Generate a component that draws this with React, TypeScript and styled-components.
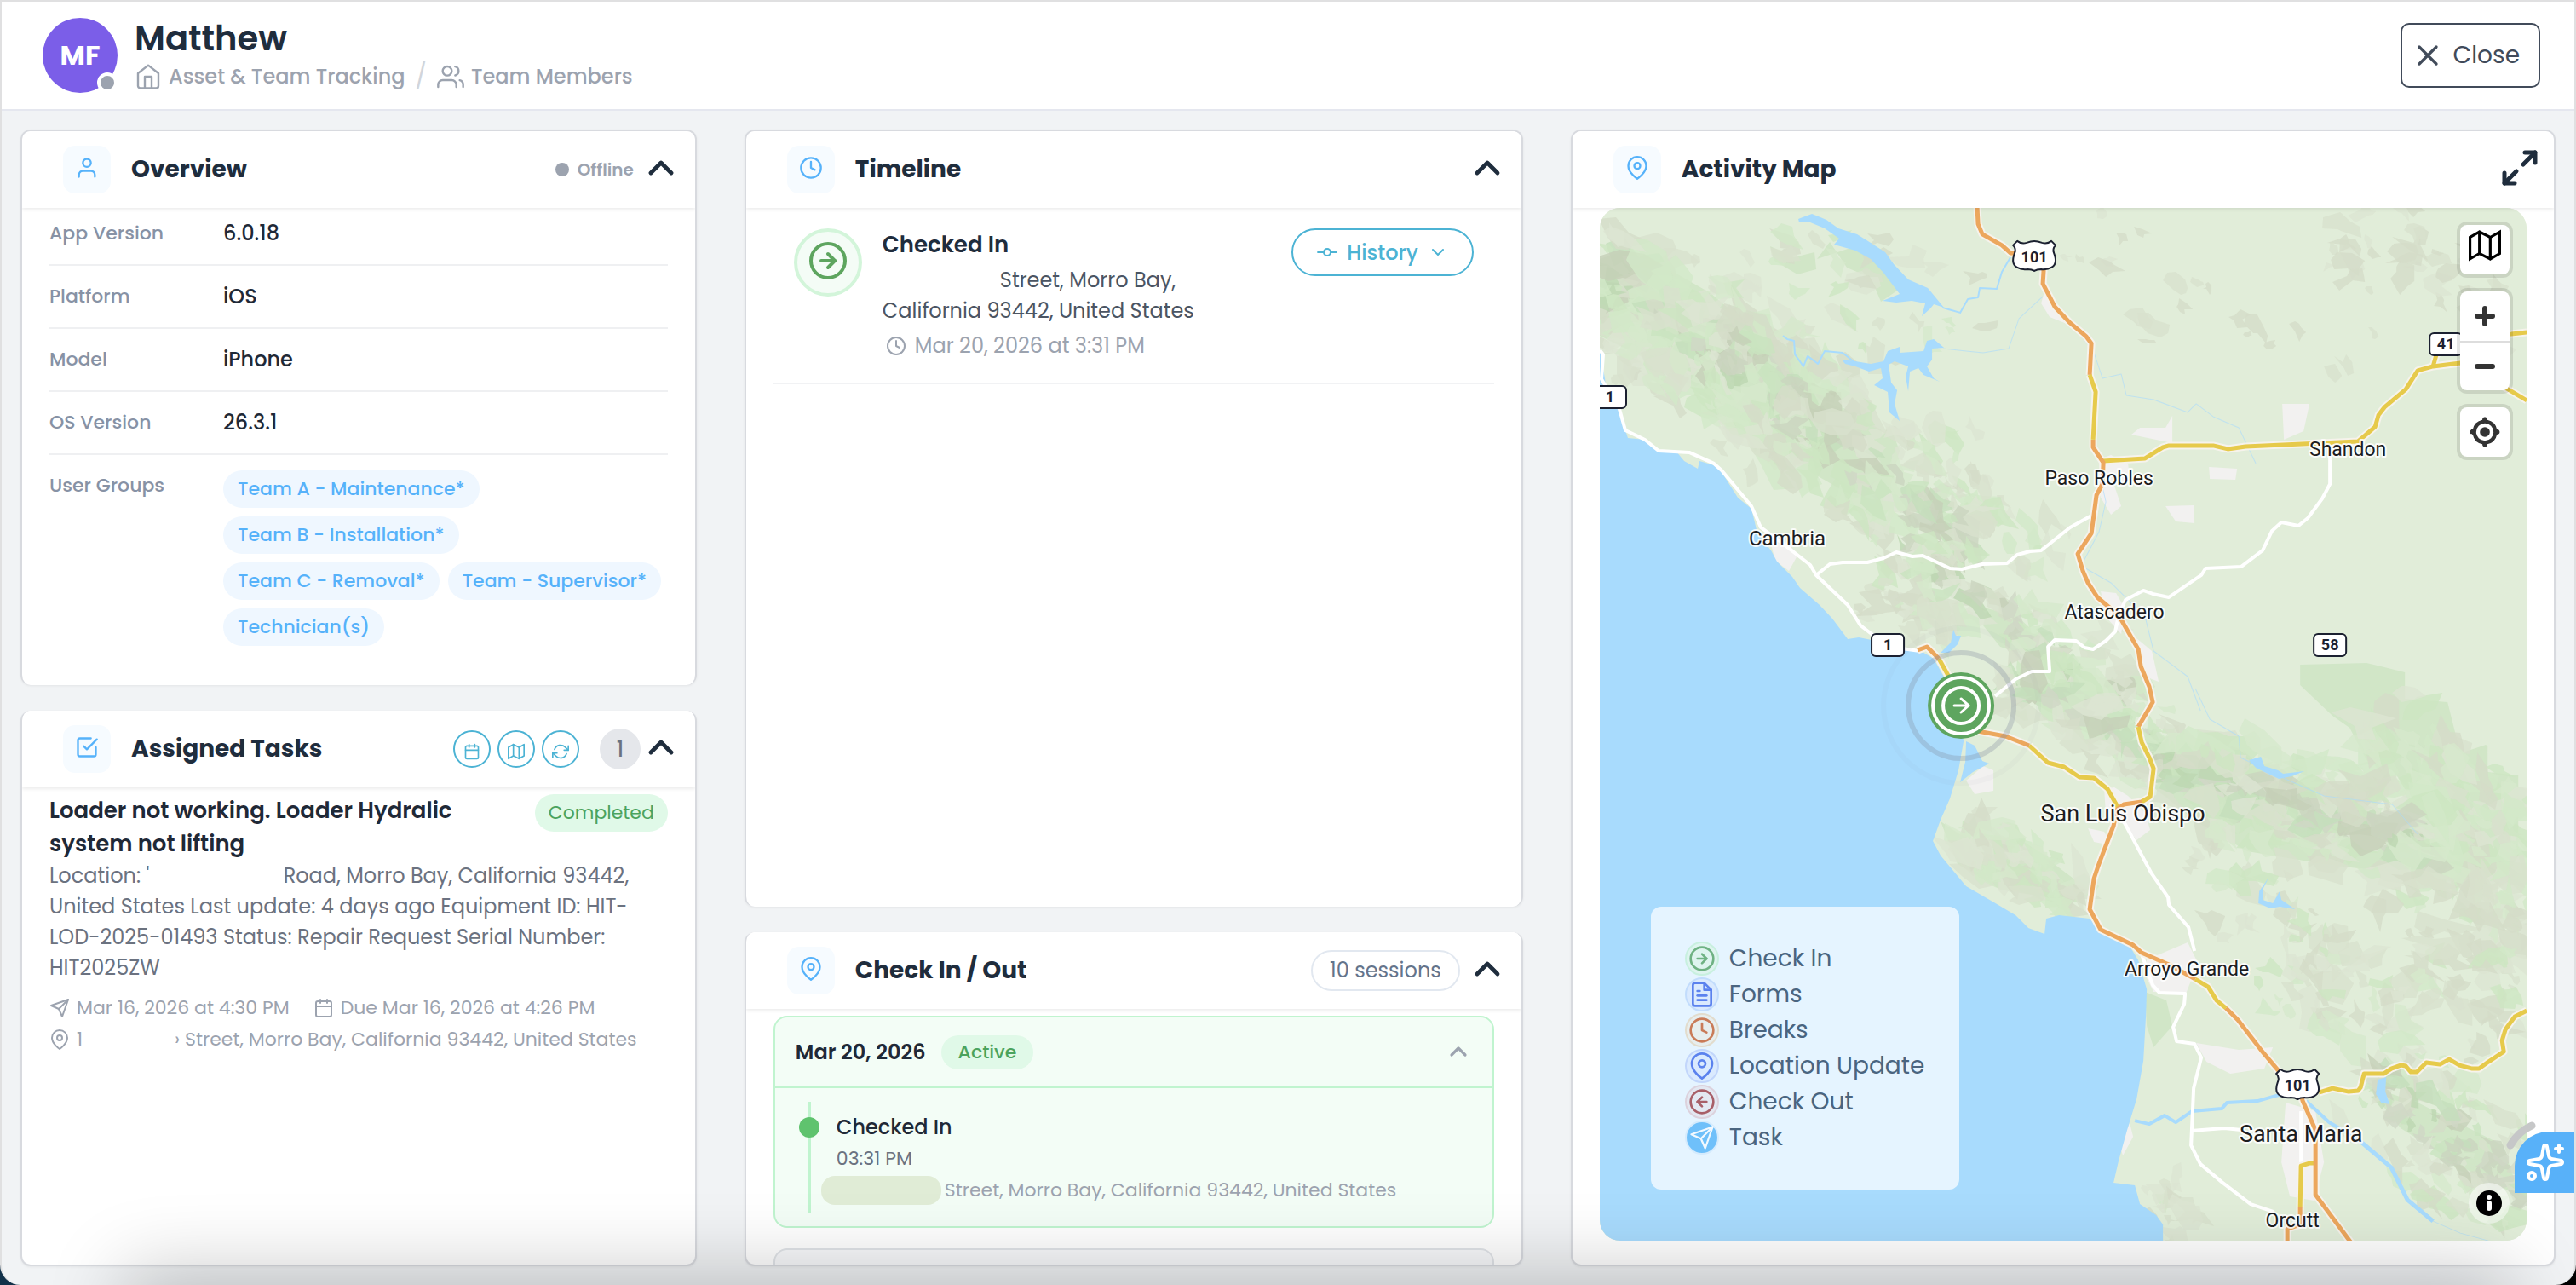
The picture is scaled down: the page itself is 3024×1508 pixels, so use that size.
import React from "react";
import styled, { createGlobalStyle } from "styled-components";
import {
  FiHome, FiUsers, FiUser, FiX, FiChevronUp, FiChevronDown, FiClock, FiMapPin, FiCheckSquare,
  FiCalendar, FiMap, FiRefreshCw, FiSend, FiGitCommit, FiMaximize2, FiArrowRightCircle,
  FiArrowLeftCircle, FiFileText,
} from "react-icons/fi";
import { Sparkles } from "lucide-react";

const c = {
  ink: "#1f2d3d",
  text: "#1f2937",
  body: "#4b5563",
  mid: "#6b7280",
  muted: "#9ca3af",
  label: "#8792a5",
  blue: "#56b2fa",
  teal: "#4cb3d4",
  green: "#5ea55f",
  line: "#eff0f2",
  edge: "#d8dadf",
};

const Global = createGlobalStyle`
  * { box-sizing: border-box; }
  body {
    margin: 0;
    background: linear-gradient(90deg, #12324a, #000);
    font-family: Poppins, Inter, "Open Sans", sans-serif;
    color: ${c.text};
  }
  h1, h2, h3, p, dl, dd, ul, ol { margin: 0; padding: 0; }
  ul, ol { list-style: none; }
  button { font: inherit; color: inherit; background: none; border: 0; padding: 0; cursor: pointer; }
  a { color: inherit; text-decoration: none; }
  svg { display: block; flex: none; }
`;

/* ---------- page frame ---------- */

const Frame = styled.div`
  position: relative;
  display: flex;
  flex-direction: column;
  height: 100vh;
  overflow: hidden;
  background: #f1f3f5;
  border: 2px solid #e0e0e1;
  border-bottom: 0;
  border-radius: 0 0 24px 24px;
`;

const BottomShade = styled.div`
  position: absolute;
  left: 160px;
  right: 90px;
  top: 100%;
  height: 80px;
  box-shadow: 0 0 90px 16px rgba(0, 0, 0, 0.22);
  pointer-events: none;
  z-index: 4;
`;

const TopBar = styled.header`
  display: flex;
  align-items: center;
  gap: 20px;
  flex: none;
  height: 128px;
  padding: 0 40px 0 48px;
  background: #fff;
  border-bottom: 2px solid #e5e7ef;
`;

const Avatar = styled.div`
  position: relative;
  display: grid;
  place-items: center;
  width: 88px;
  height: 88px;
  border-radius: 50%;
  background: #7b5ee8;
  color: #fff;
  font-size: 32px;
  font-weight: 700;
`;

const Presence = styled.span`
  position: absolute;
  right: 0;
  bottom: 0;
  width: 24px;
  height: 24px;
  border: 4px solid #fff;
  border-radius: 50%;
  background: ${c.muted};
`;

const Identity = styled.div`
  flex: 1;
  padding-top: 4px;
`;

const Name = styled.h1`
  font-size: 40px;
  line-height: 46px;
  font-weight: 600;
  color: ${c.ink};
`;

const Crumbs = styled.nav`
  display: flex;
  align-items: center;
  gap: 12px;
  font-size: 24px;
  font-weight: 500;
  line-height: 44px;
  color: ${c.muted};
  span { color: #d1d5db; font-size: 28px; font-weight: 400; }
`;

const Crumb = styled.a`
  display: flex;
  align-items: center;
  gap: 8px;
`;

const CloseButton = styled.button`
  display: flex;
  align-items: center;
  gap: 10px;
  height: 76px;
  padding: 0 22px 0 10px;
  border: 2px solid #414b5a;
  border-radius: 10px;
  color: #414b5a;
  font-size: 28px;
`;

const Board = styled.main`
  flex: 1;
  min-height: 0;
  display: grid;
  grid-template-columns: 793fr 913fr 1155fr;
  gap: 56px;
  padding: 22px;
`;

const Column = styled.div`
  display: flex;
  flex-direction: column;
  gap: 30px;
  min-width: 0;
  min-height: 0;
`;

/* ---------- cards ---------- */

const CardBox = styled.section<{ $grow: number; $open?: "top" | "bottom" }>`
  flex: ${(p) => p.$grow} 1 0;
  min-height: 0;
  display: flex;
  flex-direction: column;
  overflow: hidden;
  background: #fff;
  border: 2px solid ${c.edge};
  ${(p) => p.$open === "top" && "border-top: 0;"}
  ${(p) => p.$open === "bottom" && "border-bottom: 0;"}
  border-radius: 12px;
  box-shadow: 0 1px 3px rgba(0, 0, 0, 0.06);
`;

const CardHead = styled.div`
  position: relative;
  z-index: 1;
  flex: none;
  display: flex;
  align-items: center;
  gap: 24px;
  height: 90px;
  padding: 0 16px 0 48px;
  background: #fff;
  box-shadow: 0 2px 4px rgba(0, 0, 0, 0.08);
`;

const IconTile = styled.span`
  display: grid;
  place-items: center;
  width: 56px;
  height: 56px;
  padding-bottom: 4px;
  border-radius: 14px;
  background: #f6fbff;
  color: ${c.blue};
`;

const CardTitle = styled.h2`
  flex: 1;
  font-size: 28px;
  font-weight: 700;
  color: ${c.ink};
`;

const Actions = styled.div<{ $gap?: number }>`
  display: flex;
  align-items: center;
  gap: ${(p) => p.$gap ?? 8}px;
`;

const IconButton = styled.button`
  padding-bottom: 4px;
  color: ${c.ink};
`;

const Status = styled.span`
  display: flex;
  align-items: center;
  gap: 10px;
  color: ${c.muted};
  font-size: 20px;
  font-weight: 600;
  &::before {
    content: "";
    width: 16px;
    height: 16px;
    border-radius: 50%;
    background: currentColor;
  }
`;

const RoundButtons = styled.div`
  display: flex;
  gap: 8px;
  margin-right: 24px;
`;

const RoundButton = styled.button`
  display: grid;
  place-items: center;
  width: 44px;
  height: 44px;
  padding-top: 6px;
  border: 2px solid ${c.teal};
  border-radius: 50%;
  color: ${c.teal};
`;

const Count = styled.span`
  display: grid;
  place-items: center;
  width: 48px;
  height: 48px;
  border-radius: 50%;
  background: #e5e7eb;
  color: ${c.mid};
  font-size: 24px;
  font-weight: 500;
`;

const Sessions = styled.span`
  padding: 0 20px;
  border: 2px solid #e2e8f0;
  border-radius: 24px;
  color: #64748b;
  font-size: 24px;
  line-height: 44px;
`;

interface CardProps {
  title: string;
  icon: React.ReactNode;
  grow?: number;
  open?: "top" | "bottom";
  actions: React.ReactNode;
  children: React.ReactNode;
}

function Card({ title, icon, grow = 1, open, actions, children }: CardProps) {
  return (
    <CardBox $grow={grow} $open={open} aria-label={title}>
      <CardHead>
        <IconTile>{icon}</IconTile>
        <CardTitle>{title}</CardTitle>
        {actions}
      </CardHead>
      {children}
    </CardBox>
  );
}

const Collapse = () => (
  <IconButton aria-label="Collapse"><FiChevronUp size={48} strokeWidth={2.4} /></IconButton>
);

/* ---------- overview ---------- */

const Facts = styled.dl`
  padding: 0 32px;
`;

const Fact = styled.div`
  display: grid;
  grid-template-columns: 204px 1fr;
  padding: 18px 0;
  border-bottom: 2px solid ${c.line};
  line-height: 36px;
  &:first-child { padding-top: 12px; }
  &:last-child { border-bottom: 0; }
  dt { color: ${c.label}; font-size: 22px; font-weight: 500; }
  dd { font-size: 24px; font-weight: 500; }
`;

const Groups = styled.dd`
  display: flex;
  flex-wrap: wrap;
  gap: 10px;
`;

const Group = styled.span`
  padding: 0 17px;
  border-radius: 22px;
  background: #eff7ff;
  color: ${c.blue};
  font-size: 22px;
  line-height: 44px;
`;

/* ---------- tasks ---------- */

const Task = styled.article`
  padding: 8px 32px;
`;

const TaskTop = styled.div`
  display: flex;
  align-items: flex-start;
  justify-content: space-between;
  gap: 60px;
  h3 { font-size: 26px; line-height: 39px; font-weight: 600; }
`;

const Badge = styled.span<{ $small?: boolean }>`
  padding: 0 ${(p) => (p.$small ? 20 : 16)}px;
  border-radius: 22px;
  background: #e0f9e8;
  color: #4ba35e;
  font-size: 22px;
  font-weight: ${(p) => (p.$small ? 500 : 400)};
  line-height: ${(p) => (p.$small ? 40 : 44)}px;
`;

const TaskText = styled.p`
  color: ${c.mid};
  font-size: 24px;
  line-height: 36px;
`;

const Blank = styled.span<{ $w: number }>`
  display: inline-block;
  width: ${(p) => p.$w}px;
`;

const Meta = styled.div`
  display: flex;
  flex-wrap: wrap;
  column-gap: 28px;
  padding-top: 10px;
  color: ${c.muted};
  font-size: 22px;
  line-height: 37px;
`;

const MetaItem = styled.span`
  display: flex;
  align-items: center;
  gap: 8px;
  white-space: pre;
`;

/* ---------- timeline ---------- */

const Event = styled.article`
  display: flex;
  align-items: flex-start;
  gap: 24px;
  margin: 0 32px;
  padding: 24px 24px 20px;
  border-bottom: 2px solid #f1f2f4;
`;

const EventMark = styled.span`
  display: grid;
  place-items: center;
  width: 80px;
  height: 80px;
  padding-bottom: 4px;
  border: 4px solid #d3f5da;
  border-radius: 50%;
  background: #f4fcf6;
  color: ${c.green};
`;

const EventText = styled.div`
  flex: 1;
  h3 { font-size: 26px; line-height: 38px; font-weight: 600; color: ${c.ink}; }
  p { max-width: 440px; padding-top: 5px; font-size: 24px; line-height: 36px; color: ${c.body}; }
`;

const EventTime = styled.time`
  display: flex;
  align-items: center;
  gap: 10px;
  padding: 4px;
  color: ${c.muted};
  font-size: 24px;
  line-height: 38px;
`;

const HistoryButton = styled.button`
  display: flex;
  align-items: center;
  gap: 11px;
  height: 56px;
  padding: 0 28px;
  border: 2px solid ${c.teal};
  border-radius: 28px;
  color: ${c.teal};
  font-size: 24px;
  font-weight: 500;
`;

/* ---------- check in / out ---------- */

const SessionList = styled.div`
  display: flex;
  flex-direction: column;
  gap: 24px;
  padding: 8px 32px 0;
`;

const Session = styled.article<{ $active?: boolean }>`
  border: 2px solid ${(p) => (p.$active ? "#c0f4cf" : "#e1e4e8")};
  border-radius: 16px;
  background: ${(p) => (p.$active ? "#f3fdf6" : "#f8f9fb")};
  min-height: 80px;
`;

const SessionHead = styled.div`
  display: flex;
  align-items: center;
  gap: 18px;
  height: 83px;
  padding: 0 24px;
  border-bottom: 2px solid #c0f4cf;
  h3 { font-size: 24px; font-weight: 600; }
  button { margin-left: auto; padding-bottom: 2px; color: ${c.muted}; }
`;

const SessionBody = styled.div`
  padding: 16px 24px 16px 38px;
`;

const Steps = styled.ol`
  border-left: 4px solid #c0f4cf;
`;

const Step = styled.li`
  position: relative;
  padding: 12px 0 8px 30px;
  &::before {
    content: "";
    position: absolute;
    left: -14px;
    top: 18px;
    width: 24px;
    height: 24px;
    border-radius: 50%;
    background: #5fc36e;
  }
  h4 { margin: 0; font-size: 24px; font-weight: 500; line-height: 36px; }
  time { display: block; font-size: 22px; line-height: 38px; color: ${c.mid}; }
`;

const StepPlace = styled.p`
  display: flex;
  align-items: center;
  gap: 4px;
  margin-left: -18px;
  font-size: 22px;
  line-height: 36px;
  color: ${c.muted};
  &::before {
    content: "";
    width: 141px;
    height: 34px;
    border-radius: 16px;
    background: #e0ecd6;
  }
`;

/* ---------- map ---------- */

const MapWrap = styled.div`
  flex: 1;
  min-height: 0;
  padding: 0 32px 28px;
`;

const MapPane = styled.div`
  position: relative;
  height: 100%;
  overflow: hidden;
  border-radius: 24px;
  background: #e1edd9;
`;

const MapDrawing = styled.svg`
  width: 100%;
  height: 100%;
  font-family: Roboto, "Noto Sans", sans-serif;
`;

const MapTools = styled.div`
  position: absolute;
  top: 20px;
  right: 20px;
  display: flex;
  flex-direction: column;
  gap: 20px;
`;

const ToolGroup = styled.div`
  width: 58px;
  overflow: hidden;
  border-radius: 8px;
  background: #fff;
  box-shadow: 0 0 0 4px rgba(0, 0, 0, 0.1);
`;

const Tool = styled.button<{ $high?: boolean }>`
  display: grid;
  place-items: center;
  width: 58px;
  height: 58px;
  padding-bottom: ${(p) => (p.$high ? 10 : 0)}px;
  color: #333;
  & + & { border-top: 2px solid #ddd; }
`;

const InfoButton = styled.button`
  position: absolute;
  right: 20px;
  bottom: 20px;
  width: 48px;
  height: 48px;
  display: grid;
  place-items: center;
  border-radius: 50%;
  background: rgba(255, 255, 255, 0.5);
`;

const Legend = styled.ul`
  position: absolute;
  left: 60px;
  bottom: 60px;
  width: 362px;
  padding: 40px;
  border-radius: 12px;
  background: rgba(255, 255, 255, 0.7);
`;

const LegendRow = styled.li`
  display: flex;
  align-items: center;
  gap: 12px;
  height: 42px;
  color: #4a6580;
  font-size: 28px;
  white-space: nowrap;
`;

const LegendMark = styled.span<{ $fg: string; $bg: string; $ring: string }>`
  display: grid;
  place-items: center;
  width: 40px;
  height: 40px;
  border: 2px solid ${(p) => p.$ring};
  border-radius: 50%;
  color: ${(p) => p.$fg};
  background: ${(p) => p.$bg};
`;

const Assistant = styled.button`
  position: absolute;
  right: -2px;
  bottom: 108px;
  display: grid;
  place-items: center;
  width: 72px;
  height: 72px;
  border-radius: 40px 0 0 0;
  background: #58b1f9;
  color: #fff;
  z-index: 6;
`;

const AssistantArc = styled.svg`
  position: absolute;
  right: 44px;
  bottom: 158px;
  z-index: 5;
`;

/* Small repeatable random source, so the relief is the same on every load. */
function source(seed: number) {
  let s = seed;
  return () => {
    s = (s * 16807) % 2147483647;
    return s / 2147483647;
  };
}

type Band = { from: [number, number]; to: [number, number]; width: number; count: number; size: number; green: number };

const bands: Band[] = [
  { from: [180, 40], to: [480, 160], width: 90, count: 34, size: 22, green: 0.35 },
  { from: [860, 10], to: [1090, 130], width: 70, count: 40, size: 22, green: 0 },
  { from: [560, 30], to: [880, 200], width: 90, count: 24, size: 18, green: 0 },
  { from: [320, 440], to: [420, 500], width: 50, count: 26, size: 22, green: 0.2 },
  { from: [380, 260], to: [520, 420], width: 60, count: 40, size: 22, green: 0.5 },
  { from: [0, 130], to: [230, 300], width: 50, count: 60, size: 26, green: 0.2 },
  { from: [-10, 70], to: [270, 250], width: 90, count: 210, size: 32, green: 0.5 },
  { from: [130, 150], to: [430, 400], width: 80, count: 190, size: 28, green: 0.45 },
  { from: [350, 400], to: [640, 600], width: 62, count: 110, size: 26, green: 0.5 },
  { from: [480, 540], to: [760, 700], width: 56, count: 130, size: 28, green: 0.55 },
  { from: [900, 600], to: [1090, 760], width: 80, count: 80, size: 30, green: 0.6 },
  { from: [960, 720], to: [1090, 860], width: 70, count: 80, size: 30, green: 0.3 },
  { from: [690, 660], to: [1000, 760], width: 66, count: 190, size: 32, green: 0.6 },
  { from: [430, 735], to: [560, 810], width: 42, count: 80, size: 26, green: 0.5 },
  { from: [700, 740], to: [900, 980], width: 80, count: 70, size: 24, green: 0.35 },
  { from: [860, 860], to: [1080, 940], width: 70, count: 56, size: 24, green: 0.25 },
  { from: [900, 1010], to: [1090, 1160], width: 90, count: 130, size: 24, green: 0.4 },
  { from: [640, 1150], to: [690, 1200], width: 40, count: 16, size: 24, green: 0.2 },
];

/* Tints for the open slopes, and deeper ones for the crest of a range. */
const slopeGreens = ["#d2e8c8", "#cde6c2", "#d6e9cc"];
const slopeGreys = ["#d8e1cd", "#d4dcc8", "#dce5d2"];
const crestGreens = ["#c4debb", "#c9e3bf", "#bdd7b2"];
const crestGreys = ["#cbd5bf", "#c5d0b8", "#d0d7c5"];

const relief = bands.flatMap((b, bi) => {
  const rnd = source(911 + bi * 7919);
  const dx = b.to[0] - b.from[0];
  const dy = b.to[1] - b.from[1];
  const len = Math.hypot(dx, dy);
  const ang = Math.atan2(dy, dx);
  return Array.from({ length: b.count }, () => {
    const t = rnd();
    const off = (rnd() + rnd() - 1) * b.width;
    const cx = b.from[0] + dx * t - (dy / len) * off;
    const cy = b.from[1] + dy * t + (dx / len) * off;
    const turn = ang + (rnd() - 0.5) * 1.6;
    const r = b.size * (0.35 + rnd());
    const n = 8;
    const points = Array.from({ length: n }, (_, i) => {
      const a = (i / n) * Math.PI * 2;
      const rr = r * (0.15 + rnd() * 1.05);
      const u = Math.cos(a) * rr;
      const v = Math.sin(a) * rr * 0.6;
      return `${Math.round(cx + u * Math.cos(turn) - v * Math.sin(turn))},${Math.round(cy + u * Math.sin(turn) + v * Math.cos(turn))}`;
    }).join(" ");
    const crest = b.count > 100 && Math.abs(off) < b.width * 0.3 && rnd() < 0.6;
    const isGreen = rnd() < b.green;
    const tints = isGreen ? (crest ? crestGreens : slopeGreens) : crest ? crestGreys : slopeGreys;
    return { points, fill: tints[Math.floor(rnd() * 3)] };
  });
});

const forests = [
  "0,60 30,50 70,85 110,130 135,140 115,125 90,122 40,128 0,118",
  "0,90 60,60 130,100 200,160 250,220 330,260 350,330 300,340 230,300 180,260 120,220 60,180 0,150",
  "200,45 228,58 252,52 254,72 232,78 205,62",
  "255,60 300,45 325,62 345,70 352,95 330,110 318,82 290,70 270,40",
  "822,536 900,534 945,545 945,576 995,580 1010,640 1040,630 1042,632 1042,662 1078,666 1078,760 1060,790 990,770 990,740 950,720 955,690 930,660 900,648 880,610 860,596 822,560",
  "640,610 700,640 760,690 820,715 900,705 960,720 1000,770 990,800 930,780 850,770 760,755 700,720 650,680",
  "640,920 665,930 672,960 650,985 642,960",
  "340,255 352,285 344,310 326,300 330,270",
  "455,470 490,480 510,505 500,525 470,515 450,490",
  "400,720 430,740 500,745 560,790 580,800 560,815 470,800 420,770",
  "480,540 560,570 640,620 640,650 560,610 490,570",
  "900,1030 960,1050 1060,1100 1080,1160 1020,1130 940,1080",
];

const towns = [
  "586,295 600,290 620,300 622,318 604,326 612,350 600,360 588,340",
  "588,450 606,452 616,470 612,500 594,480",
  "630,505 648,520 656,556 640,550",
  "592,682 604,680 620,690 640,710 646,730 630,742 616,724 594,712",
  "573,728 592,732 600,748 580,744",
  "201,395 220,392 232,408 222,426 206,414",
  "430,672 450,655 462,660 462,684 440,688",
  "642,882 690,862 702,886 688,922 650,920 640,900",
  "700,980 750,988 790,985 780,1010 740,1016 712,1002",
  "805,1050 840,1060 850,1120 838,1165 810,1160 800,1120",
  "801,230 833,230 826,262 803,272",
  "664,258 672,244 672,276 624,266 634,258",
  "715,304 748,306 746,319 716,318",
  "664,350 697,349 698,370 676,368",
  "522,98 536,118 548,136 528,128 518,112",
  "610,1100 622,1074 626,1090 614,1112",
];

const water =
  "M0,167 L6,200 L10,236 21,236 30,261 33,270 53,272 69,285 90,286 99,297 115,306 117,297 134,302 143,310 162,340 178,353 185,382 201,402 208,415 226,433 235,446 258,466 273,482 291,506 304,504 319,507 354,518 377,520 392,529 407,556 420,587 427,626 421,660 411,693 400,718 391,743 400,760 415,778 430,796 461,814 488,830 503,845 522,852 524,834 539,830 575,834 592,852 623,868 632,883 642,917 641,948 638,1001 630,1046 619,1082 609,1118 603,1144 628,1147 634,1169 653,1182 661,1193 661,1212 0,1212Z";

const lakes = [
  "M233,13 249,7 266,14 280,24 302,31 318,41 335,52 345,66 362,84 385,94 404,117 392,113 388,118 378,127 382,112 366,109 348,111 332,109 352,101 342,88 333,76 318,60 300,50 275,43 281,36 264,24 247,17 234,17Z",
  "M284,178 300,180 318,183 333,180 338,168 352,163 352,170 380,168 384,156 392,154 404,164 390,165 390,178 384,186 392,200 399,204 380,196 374,188 364,192 362,215 359,198 362,186 346,180 339,184 342,205 349,214 346,230 352,250 340,240 338,216 322,208 332,200 330,188 316,192 300,186 288,183Z",
  "M415,495 418,502 424,502 420,512 410,522 400,522 412,510Z",
  "M762,648 776,644 780,655 796,660 802,664 827,661 812,667 797,670 776,660 770,657Z",
  "M785,786 778,800 778,812 790,816 798,802 800,812 816,823 798,820 787,822 773,816 774,802Z",
  "M913,1023 923,1020 922,1037 927,1052 917,1050 911,1040Z",
  "M430,626 440,631 449,649 457,652 438,662 423,674 429,650Z",
];

const rivers: [string, number][] = [
  ["402,117 423,123 432,107 444,105 446,94 466,95 472,75 482,58", 2],
  ["215,150 220,154 228,156 229,172 239,186 244,174 256,183 264,168 285,170 300,182", 2],
  ["628,1071 645,1075 663,1065 676,1073 695,1060 730,1057 736,1050 772,1048 793,1042 819,1036", 4],
  ["829,1048 856,1073 890,1093", 4],
  ["890,1093 929,1126 948,1164 978,1189", 5],
  ["978,1189 1010,1203 1043,1212", 1],
  ["403,165 430,168 450,170 480,165 492,130 520,104", 1],
  ["552,132 580,170 590,200 612,195 618,220 650,225 690,240 700,230 720,245 750,258 770,300", 1],
  ["586,310 594,345 586,380 565,420 600,440 640,480 650,520 690,550 705,590", 1],
  ["699,564 716,600 750,620 752,645 800,668 850,690 930,700 960,735", 1],
];

const whiteRoads = [
  "0,167 4,172 2,201 23,236 30,261 53,272 69,285 105,287 134,300 143,308 178,350 189,375 216,395 247,419 254,431 291,466 306,490 319,500 354,517 376,520",
  "254,431 270,418 285,416 314,416 333,411 348,404 367,409 379,408 411,423 425,424 449,418 478,417 490,407 505,403 518,402 552,375 579,360",
  "464,573 488,553 507,544 528,544 526,515 534,507 559,508 569,516 579,518 594,508 605,497 609,478 617,460 638,449 649,453 668,457 706,431 711,423 753,421 778,402 789,379 800,369 820,373 831,364 848,341 857,324 857,279",
  "615,720 647,780 667,809 668,818 691,844 698,872",
  "636,876 649,912 657,921 687,922 686,934 673,961 677,978 698,981 706,997 697,1033 694,1100 705,1122 730,1143 764,1169 791,1178",
  "694,1083 733,1080 753,1082",
  "823,1060 823,1124",
];

const ORANGE = "#eca75d";
const YELLOW = "#e6ca4b";

const mainRoads: [string, string][] = [
  ["591,297 640,294 661,281 668,279 720,279 737,283 758,280 890,274 910,257 914,243 921,234 946,213 960,191 978,186 1010,182 1040,198 1066,213 1088,226", YELLOW],
  ["978,186 982,172 1020,150 1070,148 1088,146", YELLOW],
  ["504,631 526,651 545,656 563,668 580,669 596,682 609,705", YELLOW],
  ["844,1038 860,1033 879,1037 890,1036 893,1032 897,1016 920,1016 929,1010 940,1006 946,1007 952,1014 959,1014 970,1003 986,1005 997,999 1009,1006 1024,1010 1032,1010 1043,1002 1061,990 1059,977 1063,964 1074,949 1088,942", YELLOW],
  ["822,1173 823,1124 833,1121 840,1121", YELLOW],
  ["807,1212 807,1198 822,1193 822,1173", ORANGE],
  ["373,519 384,515 398,529", ORANGE],
  ["398,529 408,547 416,562", YELLOW],
  ["438,613 476,620 504,631", ORANGE],
  ["443,0 444,19 449,31 472,44 482,53 510,55 521,73 520,89 534,116 552,135 571,151 577,159 575,196", ORANGE],
  ["575,196 582,216 579,272", YELLOW],
  ["579,272 579,281 591,299 590,324 583,337 577,382 561,406 567,426 573,440 584,457 609,478 632,518 635,538 645,562 649,580 632,609", ORANGE],
  ["632,609 636,627 645,645 650,658 646,691 636,697", YELLOW],
  ["636,697 615,700 607,706 603,725 591,756 585,772 580,787 575,823 588,847 626,865 636,874 668,888 699,905", ORANGE],
  ["699,905 714,914 724,930 735,939", YELLOW],
  ["735,939 749,953 776,988 797,1013 819,1028 825,1048 840,1082 840,1158 886,1220", ORANGE],
];

const places: [string, number, number, number][] = [
  ["Cambria", 220, 396, 24],
  ["Paso Robles", 586, 325, 23],
  ["Atascadero", 604, 482, 23],
  ["Shandon", 878, 291, 23],
  ["San Luis Obispo", 614, 720, 27],
  ["Arroyo Grande", 689, 901, 23],
  ["Santa Maria", 823, 1096, 27],
  ["Orcutt", 813, 1196, 23],
];

const shields: [string, number, number][] = [
  ["1", 12, 222],
  ["1", 338, 513],
  ["58", 857, 513],
  ["41", 993, 160],
];

const usShields: [number, number][] = [[510, 56], [819, 1028]];

function ActivityMap() {
  return (
    <MapDrawing viewBox="0 0 1088 1212" preserveAspectRatio="xMidYMid slice" role="img" aria-label="Central coast map">
      <rect width="1088" height="1212" fill="#e1edd9" />
      {forests.map((p) => <polygon key={p} points={p} fill="#d1e6c7" />)}
      {relief.map((r, i) => <polygon key={i} points={r.points} fill={r.fill} fillOpacity="0.8" />)}
      {towns.map((p) => <polygon key={p} points={p} fill="#f2f1f0" />)}
      <path d={water} fill="#a8dbfd" />
      {lakes.map((d) => <path key={d} d={d} fill="#a8dbfd" />)}
      <g fill="none" stroke="#a8dbfd" strokeLinejoin="round">
        {rivers.map(([p, w]) => <polyline key={p} points={p} strokeWidth={w} strokeOpacity={w === 1 ? 0.6 : 1} />)}
      </g>
      <g fill="none" stroke="#fff" strokeWidth="4" strokeLinejoin="round">
        {whiteRoads.map((p) => <polyline key={p} points={p} />)}
      </g>
      <g fill="none" stroke="#f6f3ec" strokeWidth="9" strokeLinejoin="round">
        {mainRoads.map(([p]) => <polyline key={p} points={p} />)}
      </g>
      <g fill="none" strokeWidth="5" strokeLinejoin="round">
        {mainRoads.map(([p, s]) => <polyline key={p} points={p} stroke={s} />)}
      </g>
      {shields.map(([t, x, y]) => (
        <g key={`${t}-${x}`}>
          <rect x={x - 19} y={y - 13} width="38" height="26" rx="5" fill="#fff" stroke="#1b2030" strokeWidth="2" />
          <text x={x} y={y + 6} textAnchor="middle" fontSize="18" fontWeight="700" fill="#1b2030">{t}</text>
        </g>
      ))}
      {usShields.map(([x, y]) => (
        <g key={x} transform={`translate(${x} ${y})`}>
          <path
            d="M-20,-17 Q-15,-13 -9,-15 Q-4,-17 0,-17 Q4,-17 9,-15 Q15,-13 20,-17 L25,-12 Q21,-8 23,-3 Q28,10 20,14 Q15,17 8,16 Q3,16 0,18 Q-3,16 -8,16 Q-15,17 -20,14 Q-28,10 -23,-3 Q-21,-8 -25,-12Z"
            fill="#fff" stroke="#1b2030" strokeWidth="2" strokeLinejoin="round"
          />
          <text y="8" textAnchor="middle" fontSize="18" fontWeight="700" fill="#1b2030">101</text>
        </g>
      ))}
      <g fill="#1d1d1f" stroke="rgba(255,255,255,0.85)" strokeWidth="4" strokeLinejoin="round" paintOrder="stroke" textAnchor="middle">
        {places.map(([t, x, y, s]) => <text key={t} x={x} y={y} fontSize={s}>{t}</text>)}
      </g>
      <circle cx="424" cy="584" r="91" fill="none" stroke="rgba(120,140,160,0.04)" strokeWidth="6" />
      <circle cx="424" cy="584" r="62" fill="none" stroke="rgba(130,140,160,0.3)" strokeWidth="6" />
      <circle cx="424" cy="584" r="39" fill={c.green} />
      <g fill="none" stroke="#fff" strokeWidth="4" strokeLinecap="round" strokeLinejoin="round">
        <circle cx="424" cy="584" r="33" />
        <circle cx="424" cy="584" r="21" />
        <path d="M416,584H433M424,576L433,584L424,592" strokeWidth="3" />
      </g>
    </MapDrawing>
  );
}

const groups = ["Team A - Maintenance*", "Team B - Installation*", "Team C - Removal*", "Team - Supervisor*", "Technician(s)"];

const facts = [
  ["App Version", "6.0.18"],
  ["Platform", "iOS"],
  ["Model", "iPhone"],
  ["OS Version", "26.3.1"],
];

const legend = [
  { label: "Check In", icon: <FiArrowRightCircle size={32} />, fg: "#6fb283", bg: "#def4ef", ring: "#c8f0df" },
  { label: "Forms", icon: <FiFileText size={32} />, fg: "#5b82ee", bg: "#daeafe", ring: "#c2dcfc" },
  { label: "Breaks", icon: <FiClock size={32} />, fg: "#c97b58", bg: "#e7eeee", ring: "#e2dccd" },
  { label: "Location Update", icon: <FiMapPin size={32} />, fg: "#5b82ee", bg: "#daeafe", ring: "#c2d6fb" },
  { label: "Check Out", icon: <FiArrowLeftCircle size={32} />, fg: "#a85f68", bg: "#e3e8f2", ring: "#dcd2dd" },
  { label: "Task", icon: <FiSend size={30} strokeWidth={1.8} />, fg: "#f2f9ff", bg: "#6fc0fa", ring: "#d5ebfd" },
];

export default function App() {
  return (
    <>
      <Global />
      <Frame>
        <TopBar>
          <Avatar>MF<Presence /></Avatar>
          <Identity>
            <Name>Matthew</Name>
            <Crumbs aria-label="Breadcrumb">
              <Crumb href="#tracking"><FiHome size={32} strokeWidth={1.8} />Asset &amp; Team Tracking</Crumb>
              <span>/</span>
              <Crumb href="#members"><FiUsers size={32} strokeWidth={1.8} />Team Members</Crumb>
            </Crumbs>
          </Identity>
          <CloseButton><FiX size={40} />Close</CloseButton>
        </TopBar>

        <Board>
          <Column>
            <Card title="Overview" icon={<FiUser size={28} />} open="bottom"
              actions={<Actions><Status>Offline</Status><Collapse /></Actions>}>
              <Facts>
                {facts.map(([k, v]) => <Fact key={k}><dt>{k}</dt><dd>{v}</dd></Fact>)}
                <Fact>
                  <dt>User Groups</dt>
                  <Groups>{groups.map((g) => <Group key={g}>{g}</Group>)}</Groups>
                </Fact>
              </Facts>
            </Card>

            <Card title="Assigned Tasks" icon={<FiCheckSquare size={28} />} open="top"
              actions={
                <Actions $gap={0}>
                  <RoundButtons>
                    <RoundButton aria-label="Calendar"><FiCalendar size={20} /></RoundButton>
                    <RoundButton aria-label="Map"><FiMap size={20} /></RoundButton>
                    <RoundButton aria-label="Refresh"><FiRefreshCw size={20} /></RoundButton>
                  </RoundButtons>
                  <Count>1</Count>
                  <Collapse />
                </Actions>
              }>
              <Task>
                <TaskTop>
                  <h3>Loader not working. Loader Hydralic system not lifting</h3>
                  <Badge>Completed</Badge>
                </TaskTop>
                <TaskText>
                  Location: '<Blank $w={151} /> <span>Road, Morro Bay, California 93442,</span>{" "}
                  <span>
                    United States Last update: 4 days ago Equipment ID: HIT-LOD-2025-01493 Status: Repair Request
                    Serial Number: HIT2025ZW
                  </span>
                </TaskText>
                <Meta>
                  <MetaItem><FiSend size={24} />Mar 16, 2026 at 4:30 PM</MetaItem>
                  <MetaItem><FiCalendar size={24} />Due Mar 16, 2026 at 4:26 PM</MetaItem>
                  <MetaItem><FiMapPin size={24} /><span>1<Blank $w={108} />› Street, Morro Bay, California 93442, United States</span></MetaItem>
                </Meta>
              </Task>
            </Card>
          </Column>

          <Column>
            <Card title="Timeline" icon={<FiClock size={28} />} grow={7} open="bottom" actions={<Collapse />}>
              <Event>
                <EventMark><FiArrowRightCircle size={48} /></EventMark>
                <EventText>
                  <h3>Checked In</h3>
                  <p><Blank $w={138} />Street, Morro Bay, California 93442, United States</p>
                  <EventTime><FiClock size={24} />Mar 20, 2026 at 3:31 PM</EventTime>
                </EventText>
                <HistoryButton><FiGitCommit size={24} />History<FiChevronDown size={24} /></HistoryButton>
              </Event>
            </Card>

            <Card title="Check In / Out" icon={<FiMapPin size={28} />} grow={3} open="top"
              actions={<Actions><Sessions>10 sessions</Sessions><Collapse /></Actions>}>
              <SessionList>
                <Session $active>
                  <SessionHead>
                    <h3>Mar 20, 2026</h3>
                    <Badge $small>Active</Badge>
                    <button aria-label="Collapse session"><FiChevronUp size={32} strokeWidth={2.4} /></button>
                  </SessionHead>
                  <SessionBody>
                    <Steps>
                      <Step>
                        <h4>Checked In</h4>
                        <time>03:31 PM</time>
                        <StepPlace>Street, Morro Bay, California 93442, United States</StepPlace>
                      </Step>
                    </Steps>
                  </SessionBody>
                </Session>
                <Session />
              </SessionList>
            </Card>
          </Column>

          <Column>
            <Card title="Activity Map" icon={<FiMapPin size={28} />}
              actions={<IconButton aria-label="Expand map"><FiMaximize2 size={48} strokeWidth={2.5} /></IconButton>}>
              <MapWrap>
                <MapPane>
                  <ActivityMap />
                  <Legend>
                    {legend.map((l) => (
                      <LegendRow key={l.label}>
                        <LegendMark $fg={l.fg} $bg={l.bg} $ring={l.ring}>{l.icon}</LegendMark>
                        {l.label}
                      </LegendRow>
                    ))}
                  </Legend>
                  <MapTools>
                    <ToolGroup>
                      <Tool $high aria-label="Map style">
                        <FiMap size={38} color="#000" strokeLinejoin="miter" />
                      </Tool>
                    </ToolGroup>
                    <ToolGroup>
                      <Tool aria-label="Zoom in">
                        <svg width="24" height="24" viewBox="0 0 24 24" fill="currentColor">
                          <rect x="0" y="9" width="24" height="6" rx="3" /><rect x="9" y="0" width="6" height="24" rx="3" />
                        </svg>
                      </Tool>
                      <Tool aria-label="Zoom out">
                        <svg width="24" height="24" viewBox="0 0 24 24" fill="currentColor">
                          <rect x="0" y="9" width="24" height="6" rx="3" />
                        </svg>
                      </Tool>
                    </ToolGroup>
                    <ToolGroup>
                      <Tool aria-label="Find my location">
                        <svg width="58" height="58" viewBox="0 0 20 20" fill="currentColor">
                          <path d="M10 4C9 4 9 5 9 5v.1A5 5 0 0 0 5.1 9H5s-1 0-1 1 1 1 1 1h.1A5 5 0 0 0 9 14.9v.1s0 1 1 1 1-1 1-1v-.1a5 5 0 0 0 3.9-3.9h.1s1 0 1-1-1-1-1-1h-.1A5 5 0 0 0 11 5.1V5s0-1-1-1zm0 2.5a3.5 3.5 0 1 1 0 7 3.5 3.5 0 1 1 0-7z" />
                          <circle cx="10" cy="10" r="2" />
                        </svg>
                      </Tool>
                    </ToolGroup>
                  </MapTools>
                  <InfoButton aria-label="Map credits">
                    <svg width="30" height="30" viewBox="0 0 30 30">
                      <circle cx="15" cy="15" r="15" fill="#000" />
                      <circle cx="15" cy="8" r="3" fill="#fff" />
                      <rect x="12" y="12" width="6" height="12" rx="3" fill="#fff" />
                    </svg>
                  </InfoButton>
                </MapPane>
              </MapWrap>
            </Card>
          </Column>
        </Board>

        <BottomShade />
        <AssistantArc width="36" height="34" viewBox="0 0 36 34" fill="none">
          <path d="M5,28 Q14,12 30,5" stroke="#c6c7c8" strokeWidth="9" strokeLinecap="round" />
        </AssistantArc>
        <Assistant aria-label="Open assistant"><Sparkles size={48} /></Assistant>
      </Frame>
    </>
  );
}
